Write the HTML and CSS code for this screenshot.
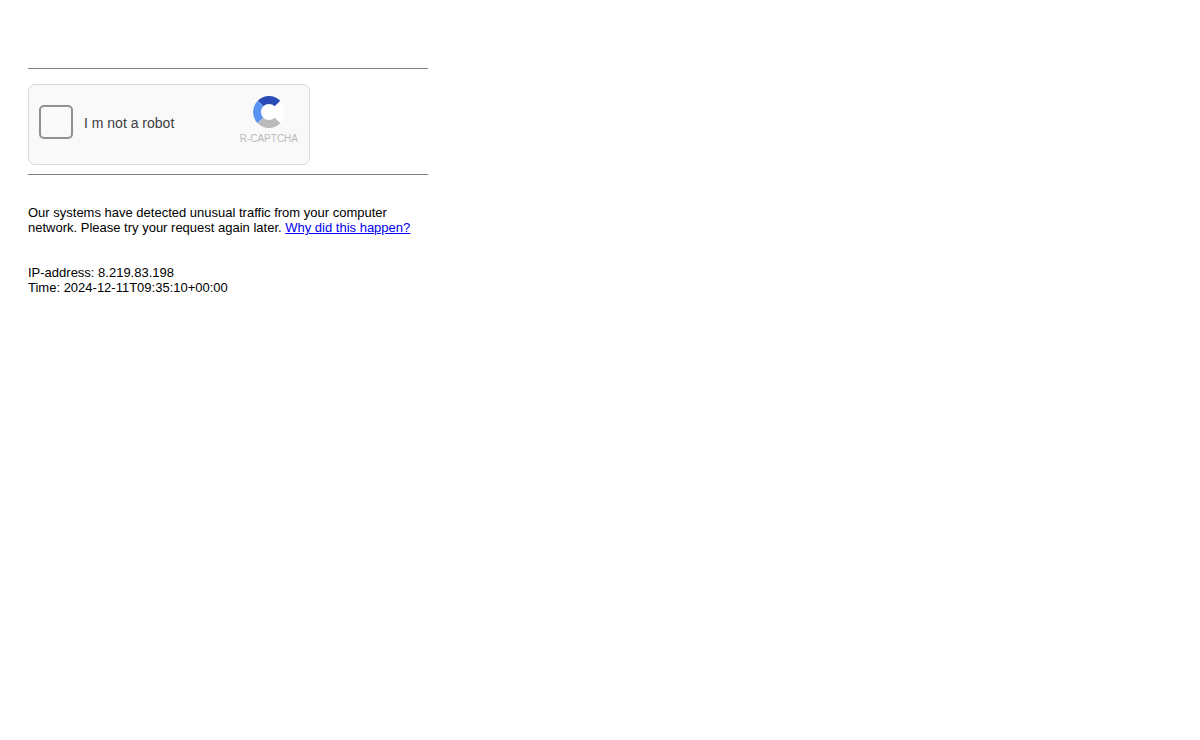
FILE: index.html
```html
<!DOCTYPE html>
<html lang="en">
<head>
    <meta charset="UTF-8">
    <meta name="viewport" content="width=device-width, initial-scale=1.0">
    <title>Robot check</title>
    <link rel="stylesheet" href="styles.css">
</head>
<body>
    <main class="container">
        <hr>
        <form class="captcha">
            <input type="checkbox" id="robot" name="robot">
            <label for="robot">I m not a robot</label>
            <div class="brand">
                <svg class="logo" viewBox="0 0 32 32" aria-hidden="true">
                    <circle cx="16" cy="16" r="16" fill="#fff"/>
                    <path d="M4.7 4.7A16 16 0 0 1 27.3 4.7L21.7 10.3A8 8 0 0 0 10.3 10.3Z" fill="#2a4bb5"/>
                    <path d="M4.7 4.7A16 16 0 0 0 4.7 27.3L10.3 21.7A8 8 0 0 1 10.3 10.3Z" fill="#5a94f2"/>
                    <path d="M4.7 27.3A16 16 0 0 0 27.3 27.3L21.7 21.7A8 8 0 0 1 10.3 21.7Z" fill="#bababa"/>
                </svg>
                <p>R-CAPTCHA</p>
            </div>
        </form>
        <hr>
        <div class="info">
            <p>Our systems have detected unusual traffic from your computer network. Please try your request again later. <a href="#">Why did this happen?</a></p>
            <p>IP-address: 8.219.83.198<br>Time: 2024-12-11T09:35:10+00:00</p>
        </div>
    </main>
</body>
</html>
```
FILE: styles.css
```css
*{
    box-sizing: border-box;
    margin: 0;
    padding: 0;
}
body{
    padding: 68px 28px;
    background-color: #fff;
    color: #000;
    font-family: Arial, "Liberation Sans", sans-serif;
    font-size: 13px;
    line-height: 15px;
}
.container{
    max-width: 400px;
}
hr{
    border: 0;
    border-top: 1px solid #808080;
}
.captcha{
    display: flex;
    align-items: flex-start;
    max-width: 282px;
    margin: 15px 0 9px;
    padding: 11px 11px 10px 10px;
    border: 1px solid #d8d8d8;
    border-radius: 7px;
    background-color: #f9f9f9;
}
.captcha input{
    appearance: none;
    width: 34px;
    height: 34px;
    margin-top: 9px;
    border: 2px solid #909090;
    border-radius: 5px;
}
.captcha input:checked{
    background-color: #5a94f2;
}
.captcha label{
    margin-left: 11px;
    color: #3c4043;
    font-size: 14px;
    line-height: 54px;
}
.brand{
    margin-left: auto;
    color: #bababa;
    font-size: 10px;
    text-align: center;
}
.logo{
    display: block;
    width: 32px;
    height: 32px;
    margin: 0 auto 3px;
}
.brand p{
    padding-bottom: 8px;
}
.info{
    padding-top: 30px;
}
.info p{
    margin-bottom: 30px;
}
.info a{
    color: #0000ee;
}
```
